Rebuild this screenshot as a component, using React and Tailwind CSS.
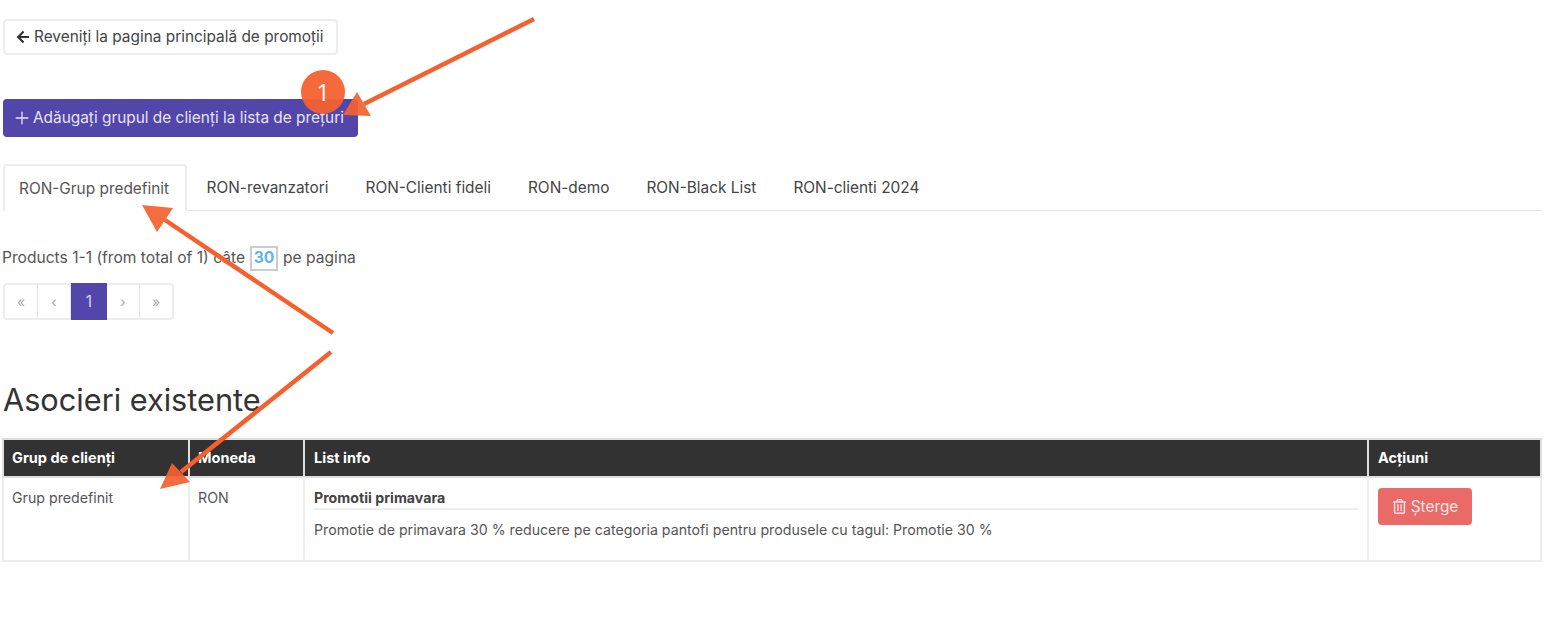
import { Plus } from 'lucide-react';
import { FaArrowLeft, FaRegTrashAlt } from 'react-icons/fa';

const TABS = ['RON-revanzatori', 'RON-Clienti fideli', 'RON-demo', 'RON-Black List', 'RON-clienti 2024'];
const PAGES = ['«', '‹', '1', '›', '»'];

const Arrows = () => (
  <svg className="absolute left-0 top-0 pointer-events-none" width="1556" height="617" viewBox="0 0 1556 617">
    <g fill="#f4612f" fillOpacity="0.93">
      <path d="M534 19 L364 104" stroke="#f4612f" strokeWidth="4.5" fill="none" />
      <polygon points="357,92 371,116 343,115" />
      <path d="M333 333 L165 220" stroke="#f4612f" strokeWidth="4.5" fill="none" />
      <polygon points="142,205 173,208 157,232" />
      <path d="M331 352 L181 472" stroke="#f4612f" strokeWidth="4.5" fill="none" />
      <polygon points="160,489 172,463 190,482" />
    </g>
  </svg>
);

const App = () => {
  return (
    <div className="relative h-[617px] w-[1556px] overflow-hidden bg-white pl-[3px] pr-[14px] pt-[19px] font-['Inter','Liberation_Sans',sans-serif] text-[15.4px] text-[#555]">
      {/* Back button */}
      <button className="flex h-[36px] w-[335px] items-center gap-[4px] rounded-[4px] border-2 border-[#ededed] pl-[11px] text-[#444]">
        <FaArrowLeft size={14} className="text-[#333]" />
        Reveniți la pagina principală de promoții
      </button>

      {/* Add button */}
      <button className="mt-[44px] flex h-[38px] w-[355px] items-center gap-[1px] rounded-[4px] bg-[#5246ab] pl-[9px] text-[#e6e3f5]">
        <Plus size={20} strokeWidth={1.6} />
        Adăugați grupul de clienți la lista de prețuri
      </button>

      {/* Tabs */}
      <div className="mt-[27px] flex h-[47px] border-b border-[#e5e5e5]">
        <div className="-mb-px flex h-[47px] items-center rounded-t-[4px] border-2 border-b-0 border-[#ededed] bg-white pl-[14px] pr-[16px] pt-[1px]">
          RON-Grup predefinit
        </div>
        <div className="ml-[1px] flex">
          {TABS.map((tab) => (
            <div key={tab} className="flex items-center px-[18.5px] pt-[1px] text-[#444]">{tab}</div>
          ))}
        </div>
      </div>

      {/* Paging summary */}
      <div className="-ml-px mt-[37px] flex h-[20px] items-center text-[15.6px] text-[#555]">
        Products 1-1 (from total of 1) câte
        <span className="mx-[5px] flex h-[25px] w-[28px] items-center justify-center border-2 border-[#ccc] font-bold text-[#5db4f5]">30</span>
        pe pagina
      </div>

      <div className="mt-[15px] flex h-[37px] w-[171px] rounded-[4px] border-2 border-[#ededed] text-[14px]">
        {PAGES.map((page) => (
          page === '1' ? (
            <div key={page} className="-my-[2px] flex w-[36px] items-center justify-center bg-[#5246ab] text-[15.4px] text-[#d8d4f0]">{page}</div>
          ) : (
            <div key={page} className="flex flex-1 items-center justify-center border-r border-[#e5e5e5] text-[#aaa] last:border-r-0">{page}</div>
          )
        ))}
      </div>

      <h2 className="mt-[60px] text-[30.7px] leading-[40px] text-[#333]">Asocieri existente</h2>

      {/* Associations table */}
      <table className="-ml-px mt-[18px] w-[1540px] table-fixed border-collapse text-[14.2px]">
        <thead>
          <tr className="h-[38px] bg-[#323232] text-left text-[14.5px] font-bold text-white">
            <th className="w-[186px] border-2 border-[#dedede] px-[8px]">Grup de clienți</th>
            <th className="w-[115px] border-2 border-[#dedede] px-[8px]">Moneda</th>
            <th className="border-2 border-[#dedede] px-[9px]">List info</th>
            <th className="w-[173px] border-2 border-[#dedede] px-[9px]">Acțiuni</th>
          </tr>
        </thead>
        <tbody>
          <tr className="h-[84px] align-top">
            <td className="border-2 border-[#ededed] px-[8px] pt-[9px]">Grup predefinit</td>
            <td className="border-2 border-[#ededed] px-[8px] pt-[9px]">RON</td>
            <td className="border-2 border-[#ededed] px-[9px] pt-[9px]">
              <div className="border-b-2 border-[#ededed] font-bold text-[#444]">Promotii primavara</div>
              <div className="mt-[9px]">Promotie de primavara 30 % reducere pe categoria pantofi pentru produsele cu tagul: Promotie 30 %</div>
            </td>
            <td className="border-2 border-[#ededed] px-[9px] pt-[10px]">
              <button className="flex h-[37px] w-[94px] items-center justify-center gap-[4px] rounded-[4px] bg-[#e96a67] text-[15.4px] text-[#fbe3e2]">
                <FaRegTrashAlt size={15} />
                Șterge
              </button>
            </td>
          </tr>
        </tbody>
      </table>

      <Arrows />

      {/* Step badge */}
      <div className="absolute left-[301px] top-[70px] flex h-[44px] w-[44px] items-center justify-center rounded-full bg-[#f4612f]/95 font-['Open_Sans',sans-serif] text-[24px] text-white">1</div>
    </div>
  );
};

export default App;
